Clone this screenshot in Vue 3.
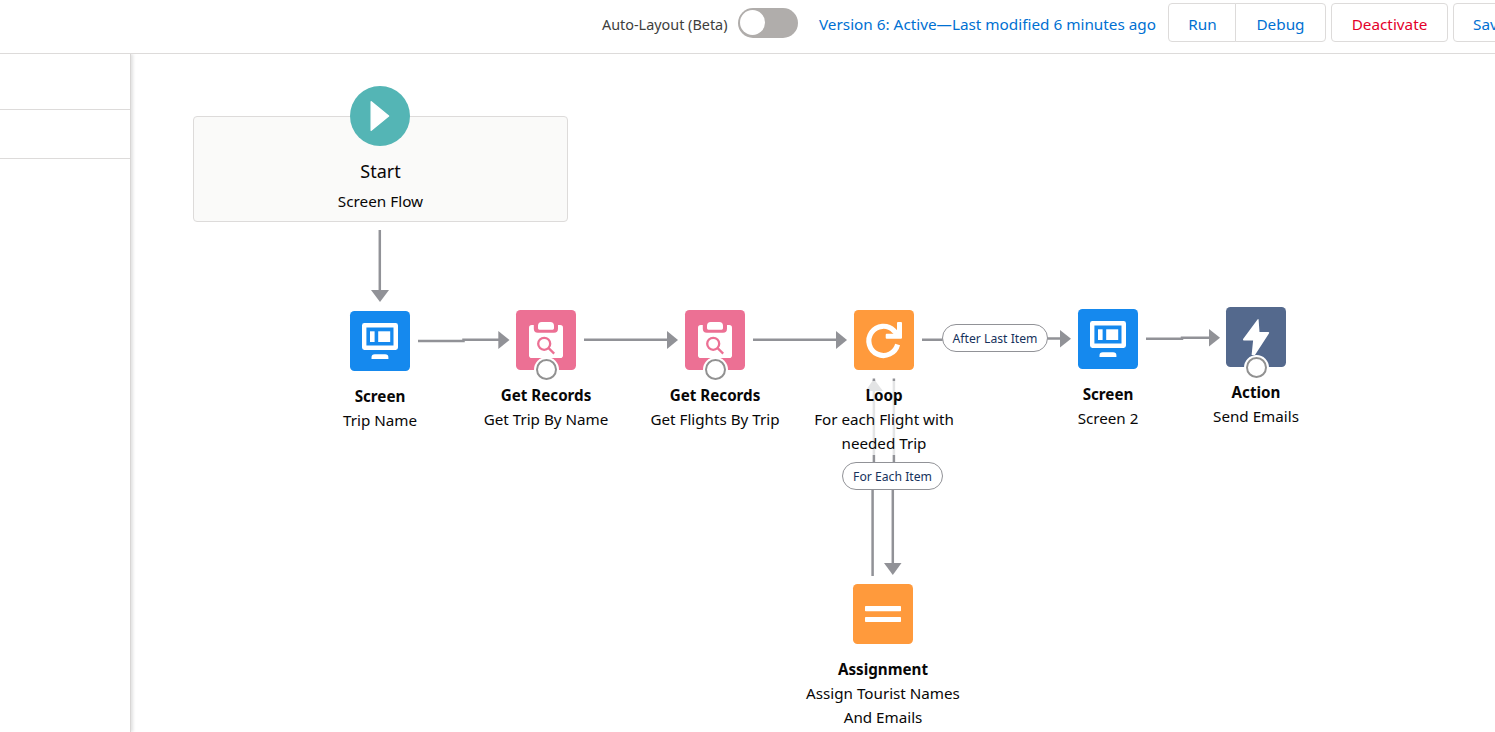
<script setup>
const origin = { x: 131, y: 54 }

const nodes = [
  { id: 'screen-1', kind: 'screen', x: 350, y: 311, title: 'Screen', lines: ['Trip Name'] },
  { id: 'get-trip', kind: 'records', x: 516, y: 310, title: 'Get Records', lines: ['Get Trip By Name'], port: true },
  { id: 'get-flights', kind: 'records', x: 685, y: 310, title: 'Get Records', lines: ['Get Flights By Trip'], port: true },
  { id: 'loop', kind: 'loop', x: 854, y: 310, title: 'Loop', lines: ['For each Flight with', 'needed Trip'] },
  { id: 'screen-2', kind: 'screen', x: 1078, y: 309, title: 'Screen', lines: ['Screen 2'] },
  { id: 'action', kind: 'action', x: 1226, y: 307, title: 'Action', lines: ['Send Emails'], port: true },
  { id: 'assignment', kind: 'assignment', x: 853, y: 584, title: 'Assignment', lines: ['Assign Tourist Names', 'And Emails'] },
]

const place = (p) => ({ left: `${p.x - origin.x}px`, top: `${p.y - origin.y}px` })
</script>

<template>
  <div class="builder">
    <header class="toolbar">
      <span class="auto">Auto-Layout (Beta)</span>
      <span class="toggle"><span class="knob"></span></span>
      <a class="version">Version 6: Active—Last modified 6 minutes ago</a>
      <div class="group">
        <button class="btn run">Run</button>
        <button class="btn debug">Debug</button>
      </div>
      <button class="btn deactivate">Deactivate</button>
      <button class="btn save">Save</button>
    </header>

    <div class="body">
      <aside class="side">
        <div class="row first"></div>
        <div class="row"></div>
      </aside>

      <main class="canvas">
        <svg class="edges" width="1364" height="678" viewBox="131 54 1364 678">
          <g fill="none" stroke="#919297" stroke-width="2.5">
            <path d="M379.8 230V291" />
            <path d="M418 340.9H463.5V339.8H499" />
            <path d="M584 339.7H668" />
            <path d="M753 339.7H837" />
            <path d="M922 339.8H944M1046 338.6H1061" />
            <path d="M1146 338.7H1182V337.8H1210" />
            <path d="M873.9 378.5V464M893.9 378.5V464M872.6 488V576M892.8 488V565" />
          </g>
          <g fill="#919297">
            <path d="M371 290H389L380 302Z" />
            <path d="M498.3 331V349L509.5 340Z" />
            <path d="M667 331V349L678 340Z" />
            <path d="M836 331V349L847 340Z" />
            <path d="M1060 330V347.5L1071 338.7Z" />
            <path d="M1209 329V346.5L1220 337.7Z" />
            <path d="M865.3 391H883L873.9 379Z" />
            <path d="M884 563H901.5L892.8 575Z" />
          </g>
        </svg>

        <section class="start" :style="place({ x: 193, y: 116 })">
          <svg class="play" width="60" height="60" viewBox="0 0 60 60">
            <circle cx="30" cy="30" r="30" fill="#54b5b5" />
            <path d="M21.2 15.8L38.6 30L21.2 44.2Z" fill="#fff" stroke="#fff" stroke-width="1.4" stroke-linejoin="round" />
          </svg>
          <div class="start-title">Start</div>
          <div class="start-sub">Screen Flow</div>
        </section>

        <article v-for="n in nodes" :key="n.id" class="node" :class="n.id" :style="place({ x: n.x - 60, y: n.y })">
          <div class="tile" :class="n.kind">
            <svg width="60" height="60" viewBox="0 0 60 60">
              <g v-if="n.kind === 'screen'" fill="#fff">
                <path fill-rule="evenodd" d="M14.4 12H45.6A2.4 2.4 0 0 1 48 14.4V36.6A2.4 2.4 0 0 1 45.6 39H14.4A2.4 2.4 0 0 1 12 36.6V14.4A2.4 2.4 0 0 1 14.4 12ZM16.4 16.4V34.6H43.5V16.4Z" />
                <rect x="20" y="20.3" width="4.6" height="10.7" />
                <rect x="28.2" y="20.3" width="12" height="10.7" />
                <path d="M21.5 48V46.6A3.3 3.3 0 0 1 24.8 43.3H35.1A3.3 3.3 0 0 1 38.4 46.6V48Z" />
              </g>
              <g v-else-if="n.kind === 'records'">
                <rect x="13" y="15" width="34" height="33" rx="2.8" fill="#fff" />
                <path d="M17.8 14.5V18.7A4 4 0 0 0 21.8 22.7H38A4 4 0 0 0 42 18.7V14.5Z" fill="#ec7094" />
                <path d="M25.8 12H34.2A3.8 3.8 0 0 1 38 15.8V18.3A1.4 1.4 0 0 1 36.6 19.7H23.4A1.4 1.4 0 0 1 22 18.3V15.8A3.8 3.8 0 0 1 25.8 12Z" fill="#fff" />
                <g fill="none" stroke="#ec7094" stroke-width="2.3">
                  <circle cx="28.2" cy="33.8" r="6" />
                  <path d="M32.6 38.2L38.2 43.6" />
                </g>
              </g>
              <g v-else-if="n.kind === 'loop'">
                <path d="M43.6 34.5A14.6 14.6 0 1 1 39.8 20.6L44 24.8" fill="none" stroke="#fff" stroke-width="5.1" />
                <path d="M43 13A1 1 0 0 1 44 12H47A1 1 0 0 1 48 13V27.8A1 1 0 0 1 47 28.8H32.7A1 1 0 0 1 31.7 27.8V24.8A1 1 0 0 1 32.7 23.8H43Z" fill="#fff" />
              </g>
              <path v-else-if="n.kind === 'action'" d="M31.7 12.3L17.1 32.1Q16.5 33.3 17.7 33.4H27.1L25.6 48H29L43.1 26.3Q43.7 25.2 42.4 25H33.5L32.6 12.6Q32.3 11.6 31.7 12.3Z" fill="#fff" />
              <g v-else fill="#fff">
                <rect x="12" y="22" width="36" height="5.2" rx=".8" />
                <rect x="12" y="33" width="36" height="5.1" rx=".8" />
              </g>
            </svg>
            <span v-if="n.port" class="port"></span>
          </div>
          <div class="caption">
            <h3>{{ n.title }}</h3>
            <p v-for="l in n.lines" :key="l">{{ l }}</p>
          </div>
        </article>

        <span class="pill after" :style="place({ x: 942, y: 324 })">After Last Item</span>
        <span class="pill each" :style="place({ x: 842, y: 462 })">For Each Item</span>
      </main>
    </div>
  </div>
</template>

<style>
body { background: #fff; overflow: hidden; }
</style>

<style scoped>
.builder {
  width: 1495px;
  height: 732px;
  overflow: hidden;
  display: flex;
  flex-direction: column;
  font-family: "Noto Sans", "Open Sans", sans-serif;
  font-size: 15.2px;
  color: #080707;
}
.toolbar {
  box-sizing: border-box;
  height: 54px;
  flex: none;
  display: flex;
  align-items: flex-start;
  padding: 3px 0 0 602px;
  border-bottom: 1px solid #dddbda;
  white-space: nowrap;
  line-height: 42px;
}
.auto { width: 136px; flex: none; font-size: 14.4px; line-height: 44px; color: #3e3e3c; }
.toggle {
  box-sizing: border-box;
  flex: none;
  width: 60px;
  height: 30px;
  margin: 5px 21px 0 0;
  padding: 2px;
  border-radius: 15px;
  background: #b0adab;
}
.knob { display: block; width: 25px; height: 25px; border-radius: 50%; background: #fff; }
.version { width: 349px; flex: none; font-size: 15.3px; color: #0070d2; }
.group { display: flex; margin-right: 5px; }
.btn {
  box-sizing: border-box;
  flex: none;
  height: 39px;
  padding: 2px 0 0;
  border: 1px solid #dddbda;
  border-radius: 4px;
  background: #fff;
  font: inherit;
  font-size: 15.3px;
  line-height: 37px;
  color: #0070d2;
}
.run { width: 68px; padding-left: 1px; border-radius: 4px 0 0 4px; }
.debug { width: 91px; margin-left: -1px; border-radius: 0 4px 4px 0; }
.deactivate { width: 117px; margin-right: 5px; color: #e4002b; }
.save { width: 110px; padding-left: 19px; text-align: left; }

.body { flex: 1; display: flex; min-height: 0; overflow: hidden; }
.side {
  width: 130px;
  flex: none;
  border-right: 1px solid #d8d6d5;
  box-shadow: 2px 0 3px rgba(0, 0, 0, .12);
  position: relative;
  z-index: 1;
}
.row { height: 48px; border-bottom: 1px solid #dddbda; }
.row.first { height: 55px; }
.canvas { flex: 1; position: relative; overflow: hidden; }
.edges { display: block; }

.start {
  position: absolute;
  box-sizing: border-box;
  width: 375px;
  height: 106px;
  padding-top: 41px;
  border: 1px solid #dddbda;
  border-radius: 4px;
  background: #fafaf9;
  text-align: center;
}
.play { position: absolute; left: 156px; top: -31px; }
.start-title { font-size: 18px; line-height: 26px; }
.start-sub { font-size: 15.3px; line-height: 34px; }

.node { position: absolute; width: 180px; text-align: center; }
.tile { position: relative; width: 60px; height: 60px; margin: 0 auto; border-radius: 4.5px; }
.tile svg { display: block; }
.screen { background: #1589ee; }
.records { background: #ec7094; }
.tile.loop { background: #ff9a3c; }
.tile.action { background: #54698d; }
.tile.assignment { background: #ff9a3c; }
.port {
  position: absolute;
  left: 20px;
  top: 49px;
  box-sizing: border-box;
  width: 21px;
  height: 21px;
  border: 2.4px solid #919191;
  border-radius: 50%;
  background: #fff;
  box-shadow: 0 0 0 2px #fff;
}
.action .port { top: 50px; }
.caption {
  width: fit-content;
  margin: 10.5px auto 0;
  padding-top: 2px;
  background: rgba(255, 255, 255, .75);
  white-space: nowrap;
}
.caption h3 { margin: 0; font-size: 15.2px; font-weight: 700; line-height: 24px; }
.caption p { margin: 0; line-height: 24.4px; }

.pill {
  position: absolute;
  box-sizing: border-box;
  height: 28px;
  border: 1px solid #919297;
  border-radius: 14px;
  background: #fff;
  color: #16325c;
  font-size: 12.2px;
  line-height: 27px;
  text-align: center;
  white-space: nowrap;
}
.after { width: 106px; }
.each { width: 101px; }
</style>
